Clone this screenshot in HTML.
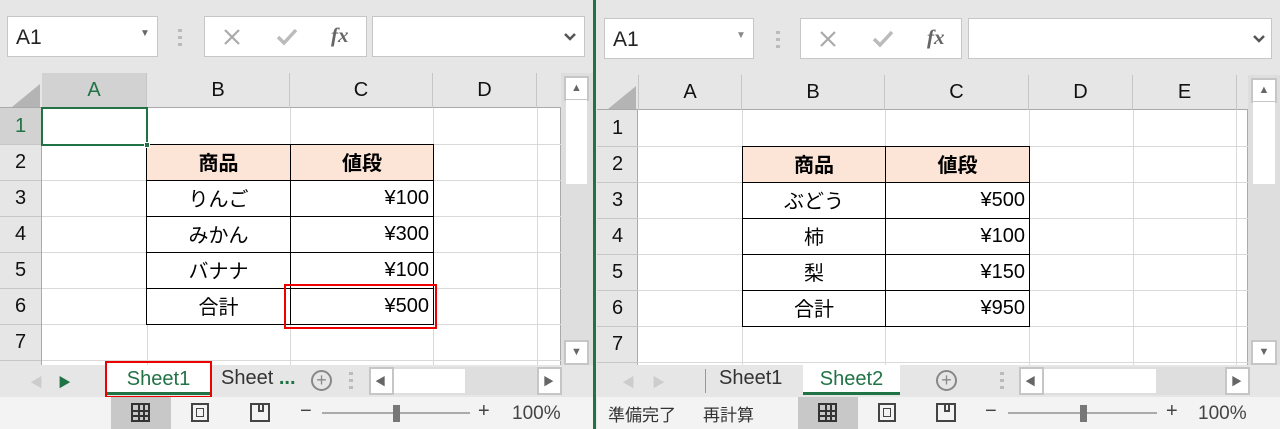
<!DOCTYPE html>
<html><head><meta charset="utf-8"><style>
*{margin:0;padding:0;box-sizing:border-box}
body{width:1280px;height:429px;overflow:hidden;position:relative;background:#e6e6e6;font-family:"Liberation Sans","Noto Sans CJK JP",sans-serif;color:#000}
div{position:absolute}
.box{background:#fff;border:1px solid #c6c6c6}
.nb{font-size:21px;color:#222;line-height:41px;padding-left:8px}
.hdr{background:#e6e6e6}
.ch{font-size:20px;text-align:center;line-height:35px;border-right:1px solid #c6c6c6;color:#111}
.rh{font-size:20px;text-align:center;line-height:36px;border-bottom:1px solid #c6c6c6;color:#111;width:41px}
.vl{width:1px;background:#d9d9d9}
.hl{height:1px;background:#d9d9d9}
.c{font-size:20px;line-height:38px;border:1px solid #000;background:#fff;font-family:"Liberation Sans","Noto Sans CJK JP",sans-serif}
.th{background:#fce4d6;font-weight:bold;text-align:center}
.ct{text-align:center}
.r{text-align:right;padding-right:4px;line-height:35px}
.dots{width:4px;height:18px;background:repeating-linear-gradient(#bbb 0 3px,transparent 3px 7px)}
.sb{background:#dedede}
.btn{background:#fff;border:2px solid #c6c6c6}
.status{background:#f3f3f3}
.tri{font-size:11px;color:#666;text-align:center}
</style></head><body>

<!-- LEFT PANE -->
<div class="box nb" style="left:7px;top:16px;width:151px;height:41px">A1</div>
<div style="left:140px;top:28px;font-size:10px;color:#666">▼</div>
<div class="dots" style="left:178px;top:29px"></div>
<div class="box" style="left:204px;top:16px;width:163px;height:41px"></div>
<svg style="position:absolute;left:222px;top:27px" width="20" height="20"><path d="M3 3L17 17M17 3L3 17" stroke="#aaa" stroke-width="2.2"/></svg>
<svg style="position:absolute;left:276px;top:27px" width="22" height="20"><path d="M2 10L8 16L20 3" stroke="#bbb" stroke-width="3.5" fill="none"/></svg>
<div style="left:331px;top:23px;font-size:21px;font-style:italic;font-weight:bold;font-family:'Liberation Serif',serif;color:#666">fx</div>
<div class="box" style="left:372px;top:16px;width:213px;height:41px"></div>
<svg style="position:absolute;left:563px;top:32px" width="14" height="10"><path d="M2 2L7 7L12 2" stroke="#555" stroke-width="2.5" fill="none"/></svg>

<div class="hdr" style="left:0;top:73px;width:561px;height:35px;border-bottom:1px solid #aaa"></div>
<div style="left:12px;top:84px;width:0;height:0;border-left:28px solid transparent;border-bottom:23px solid #b4b4b4"></div>
<div class="ch" style="left:42px;top:73px;width:105px;height:35px;background:#d2d2d2;color:#217346">A</div>
<div class="ch" style="left:147px;top:73px;width:143px;height:35px">B</div>
<div class="ch" style="left:290px;top:73px;width:143px;height:35px">C</div>
<div class="ch" style="left:433px;top:73px;width:104px;height:35px">D</div>
<div class="hdr" style="left:0;top:108px;width:42px;height:257px;border-right:1px solid #aaa"></div>
<div class="rh" style="left:0;top:108px;background:#d2d2d2;color:#217346">1</div>
<div class="rh" style="left:0;top:144px">2</div>
<div class="rh" style="left:0;top:180px">3</div>
<div class="rh" style="left:0;top:216px">4</div>
<div class="rh" style="left:0;top:252px">5</div>
<div class="rh" style="left:0;top:288px">6</div>
<div class="rh" style="left:0;top:324px">7</div>
<div style="left:42px;top:108px;width:519px;height:257px;background:#fff;border-right:1px solid #aaa"></div>
<div class="vl" style="left:147px;top:108px;height:257px"></div>
<div class="vl" style="left:290px;top:108px;height:257px"></div>
<div class="vl" style="left:433px;top:108px;height:257px"></div>
<div class="vl" style="left:537px;top:108px;height:257px"></div>
<div class="hl" style="left:42px;top:144px;width:519px"></div>
<div class="hl" style="left:42px;top:180px;width:519px"></div>
<div class="hl" style="left:42px;top:216px;width:519px"></div>
<div class="hl" style="left:42px;top:252px;width:519px"></div>
<div class="hl" style="left:42px;top:288px;width:519px"></div>
<div class="hl" style="left:42px;top:324px;width:519px"></div>
<div class="hl" style="left:42px;top:360px;width:519px"></div>
<div class="c th" style="left:146px;top:144px;width:145px;height:37px">商品</div>
<div class="c th" style="left:290px;top:144px;width:144px;height:37px">値段</div>
<div class="c ct" style="left:146px;top:180px;width:145px;height:37px">りんご</div>
<div class="c r" style="left:290px;top:180px;width:144px;height:37px">¥100</div>
<div class="c ct" style="left:146px;top:216px;width:145px;height:37px">みかん</div>
<div class="c r" style="left:290px;top:216px;width:144px;height:37px">¥300</div>
<div class="c ct" style="left:146px;top:252px;width:145px;height:37px">バナナ</div>
<div class="c r" style="left:290px;top:252px;width:144px;height:37px">¥100</div>
<div class="c ct" style="left:146px;top:288px;width:145px;height:37px">合計</div>
<div class="c r" style="left:290px;top:288px;width:144px;height:37px">¥500</div>
<div style="left:284px;top:284px;width:153px;height:45px;border:2px solid #e00"></div>
<div style="left:41px;top:107px;width:107px;height:39px;border:2px solid #217346"></div>
<div style="left:144px;top:142px;width:6px;height:6px;background:#217346;border:1px solid #fff"></div>
<div class="sb" style="left:561px;top:73px;width:32px;height:292px"></div>
<div class="btn" style="left:564px;top:76px;width:25px;height:25px"></div>
<div class="tri" style="left:564px;top:82px;width:25px">▲</div>
<div style="left:566px;top:100px;width:21px;height:84px;background:#fff"></div>
<div class="btn" style="left:564px;top:340px;width:25px;height:25px"></div>
<div class="tri" style="left:564px;top:346px;width:25px">▼</div>
<div style="left:30px;top:372px;font-size:13px;color:#ccc">◀</div>
<div style="left:58px;top:372px;font-size:13px;color:#217346">▶</div>
<div style="left:107px;top:365px;width:103px;height:30px;background:#fff;border-bottom:3px solid #217346;font-size:20px;color:#217346;text-align:center;line-height:28px">Sheet1</div>
<div style="left:105px;top:361px;width:107px;height:37px;border:2px solid #e00"></div>
<div style="left:221px;top:367px;font-size:20px;color:#333">Sheet <span style="color:#217346;font-weight:bold">...</span></div>
<div style="left:311px;top:370px;width:21px;height:21px;border:2px solid #888;border-radius:50%;font-size:18px;line-height:16px;text-align:center;color:#888">+</div>
<div class="dots" style="left:349px;top:372px"></div>
<div class="sb" style="left:369px;top:367px;width:193px;height:28px"></div>
<div class="btn" style="left:369px;top:367px;width:25px;height:28px"></div>
<div class="tri" style="left:369px;top:373px;width:23px">◀</div>
<div style="left:394px;top:369px;width:71px;height:24px;background:#fff"></div>
<div class="btn" style="left:537px;top:367px;width:25px;height:28px"></div>
<div class="tri" style="left:537px;top:373px;width:23px">▶</div>
<div class="status" style="left:0;top:397px;width:593px;height:32px"></div>
<div style="left:111px;top:397px;width:60px;height:32px;background:#c8c8c8"></div>
<div style="left:131px;top:403px;width:19px;height:19px;border:2px solid #333;background:linear-gradient(90deg,transparent 5px,#333 5px 7px,transparent 7px 10px,#333 10px 12px,transparent 12px),linear-gradient(transparent 5px,#333 5px 7px,transparent 7px 10px,#333 10px 12px,transparent 12px)"></div>
<div style="left:191px;top:403px;width:18px;height:19px;border:2px solid #444"><div style="left:3px;top:3px;width:8px;height:9px;border:1px solid #444"></div></div>
<div style="left:250px;top:403px;width:20px;height:19px;border:2px solid #444"><div style="left:6px;top:-2px;width:6px;height:9px;border:2px solid #444;border-top:none"></div></div>
<div style="left:300px;top:400px;font-size:20px;color:#444">−</div>
<div style="left:322px;top:412px;width:148px;height:2px;background:#aaa"></div>
<div style="left:393px;top:405px;width:7px;height:17px;background:#777"></div>
<div style="left:478px;top:400px;font-size:20px;color:#444">+</div>
<div style="left:512px;top:403px;font-size:19px;color:#444">100%</div>

<div style="left:593px;top:0;width:4px;height:429px;background:#e6e6e6"></div>
<div style="left:593px;top:0;width:3px;height:429px;background:#217346"></div>

<!-- RIGHT PANE -->
<div class="box nb" style="left:604px;top:18px;width:150px;height:41px">A1</div>
<div style="left:736px;top:30px;font-size:10px;color:#888">▼</div>
<div class="dots" style="left:776px;top:31px"></div>
<div class="box" style="left:800px;top:18px;width:162px;height:41px"></div>
<svg style="position:absolute;left:818px;top:29px" width="20" height="20"><path d="M3 3L17 17M17 3L3 17" stroke="#aaa" stroke-width="2.2"/></svg>
<svg style="position:absolute;left:872px;top:29px" width="22" height="20"><path d="M2 10L8 16L20 3" stroke="#bbb" stroke-width="3.5" fill="none"/></svg>
<div style="left:927px;top:25px;font-size:21px;font-style:italic;font-weight:bold;font-family:'Liberation Serif',serif;color:#666">fx</div>
<div class="box" style="left:968px;top:18px;width:304px;height:41px"></div>
<svg style="position:absolute;left:1252px;top:34px" width="14" height="10"><path d="M2 2L7 7L12 2" stroke="#555" stroke-width="2.5" fill="none"/></svg>

<div class="hdr" style="left:597px;top:75px;width:651px;height:35px;border-bottom:1px solid #aaa"></div>
<div style="left:608px;top:86px;width:0;height:0;border-left:28px solid transparent;border-bottom:23px solid #b4b4b4"></div>
<div class="ch" style="left:638px;top:75px;width:104px;height:35px;border-left:1px solid #c6c6c6">A</div>
<div class="ch" style="left:742px;top:75px;width:143px;height:35px">B</div>
<div class="ch" style="left:885px;top:75px;width:144px;height:35px">C</div>
<div class="ch" style="left:1029px;top:75px;width:104px;height:35px">D</div>
<div class="ch" style="left:1133px;top:75px;width:104px;height:35px">E</div>
<div class="hdr" style="left:597px;top:110px;width:41px;height:255px;border-right:1px solid #aaa"></div>
<div class="rh" style="left:597px;top:110px">1</div>
<div class="rh" style="left:597px;top:146px">2</div>
<div class="rh" style="left:597px;top:182px">3</div>
<div class="rh" style="left:597px;top:218px">4</div>
<div class="rh" style="left:597px;top:254px">5</div>
<div class="rh" style="left:597px;top:290px">6</div>
<div class="rh" style="left:597px;top:326px">7</div>
<div style="left:638px;top:110px;width:610px;height:255px;background:#fff;border-right:1px solid #aaa"></div>
<div class="vl" style="left:742px;top:110px;height:255px"></div>
<div class="vl" style="left:885px;top:110px;height:255px"></div>
<div class="vl" style="left:1029px;top:110px;height:255px"></div>
<div class="vl" style="left:1133px;top:110px;height:255px"></div>
<div class="vl" style="left:1236px;top:110px;height:255px"></div>
<div class="hl" style="left:638px;top:146px;width:610px"></div>
<div class="hl" style="left:638px;top:182px;width:610px"></div>
<div class="hl" style="left:638px;top:218px;width:610px"></div>
<div class="hl" style="left:638px;top:254px;width:610px"></div>
<div class="hl" style="left:638px;top:290px;width:610px"></div>
<div class="hl" style="left:638px;top:326px;width:610px"></div>
<div class="hl" style="left:638px;top:362px;width:610px"></div>
<div class="c th" style="left:742px;top:146px;width:144px;height:37px">商品</div>
<div class="c th" style="left:885px;top:146px;width:145px;height:37px">値段</div>
<div class="c ct" style="left:742px;top:182px;width:144px;height:37px">ぶどう</div>
<div class="c r" style="left:885px;top:182px;width:145px;height:37px">¥500</div>
<div class="c ct" style="left:742px;top:218px;width:144px;height:37px">柿</div>
<div class="c r" style="left:885px;top:218px;width:145px;height:37px">¥100</div>
<div class="c ct" style="left:742px;top:254px;width:144px;height:37px">梨</div>
<div class="c r" style="left:885px;top:254px;width:145px;height:37px">¥150</div>
<div class="c ct" style="left:742px;top:290px;width:144px;height:37px">合計</div>
<div class="c r" style="left:885px;top:290px;width:145px;height:37px">¥950</div>
<div class="sb" style="left:1248px;top:75px;width:32px;height:290px"></div>
<div class="btn" style="left:1251px;top:78px;width:26px;height:25px"></div>
<div class="tri" style="left:1251px;top:84px;width:26px">▲</div>
<div style="left:1253px;top:102px;width:22px;height:82px;background:#fff"></div>
<div class="btn" style="left:1251px;top:340px;width:26px;height:25px"></div>
<div class="tri" style="left:1251px;top:346px;width:26px">▼</div>
<div style="left:622px;top:372px;font-size:13px;color:#ccc">◀</div>
<div style="left:652px;top:372px;font-size:13px;color:#ccc">▶</div>
<div style="left:705px;top:369px;width:1px;height:24px;background:#999"></div>
<div style="left:719px;top:367px;font-size:20px;color:#333">Sheet1</div>
<div style="left:803px;top:365px;width:97px;height:30px;background:#fff;border-bottom:3px solid #217346;font-size:20px;color:#217346;text-align:center;line-height:28px">Sheet2</div>
<div style="left:936px;top:370px;width:21px;height:21px;border:2px solid #888;border-radius:50%;font-size:18px;line-height:16px;text-align:center;color:#888">+</div>
<div class="dots" style="left:1000px;top:372px"></div>
<div class="sb" style="left:1019px;top:367px;width:231px;height:28px"></div>
<div class="btn" style="left:1019px;top:367px;width:25px;height:28px"></div>
<div class="tri" style="left:1019px;top:373px;width:23px">◀</div>
<div style="left:1044px;top:369px;width:112px;height:24px;background:#fff"></div>
<div class="btn" style="left:1225px;top:367px;width:25px;height:28px"></div>
<div class="tri" style="left:1225px;top:373px;width:23px">▶</div>
<div class="status" style="left:597px;top:397px;width:683px;height:32px"></div>
<div style="left:608px;top:401px;font-size:17px;color:#333">準備完了</div>
<div style="left:703px;top:401px;font-size:17px;color:#333">再計算</div>
<div style="left:798px;top:397px;width:60px;height:32px;background:#c8c8c8"></div>
<div style="left:818px;top:403px;width:19px;height:19px;border:2px solid #333;background:linear-gradient(90deg,transparent 5px,#333 5px 7px,transparent 7px 10px,#333 10px 12px,transparent 12px),linear-gradient(transparent 5px,#333 5px 7px,transparent 7px 10px,#333 10px 12px,transparent 12px)"></div>
<div style="left:878px;top:403px;width:18px;height:19px;border:2px solid #444"><div style="left:3px;top:3px;width:8px;height:9px;border:1px solid #444"></div></div>
<div style="left:936px;top:403px;width:20px;height:19px;border:2px solid #444"><div style="left:6px;top:-2px;width:6px;height:9px;border:2px solid #444;border-top:none"></div></div>
<div style="left:985px;top:400px;font-size:20px;color:#444">−</div>
<div style="left:1008px;top:412px;width:149px;height:2px;background:#aaa"></div>
<div style="left:1080px;top:405px;width:7px;height:17px;background:#777"></div>
<div style="left:1166px;top:400px;font-size:20px;color:#444">+</div>
<div style="left:1198px;top:403px;font-size:19px;color:#444">100%</div>
</body></html>
